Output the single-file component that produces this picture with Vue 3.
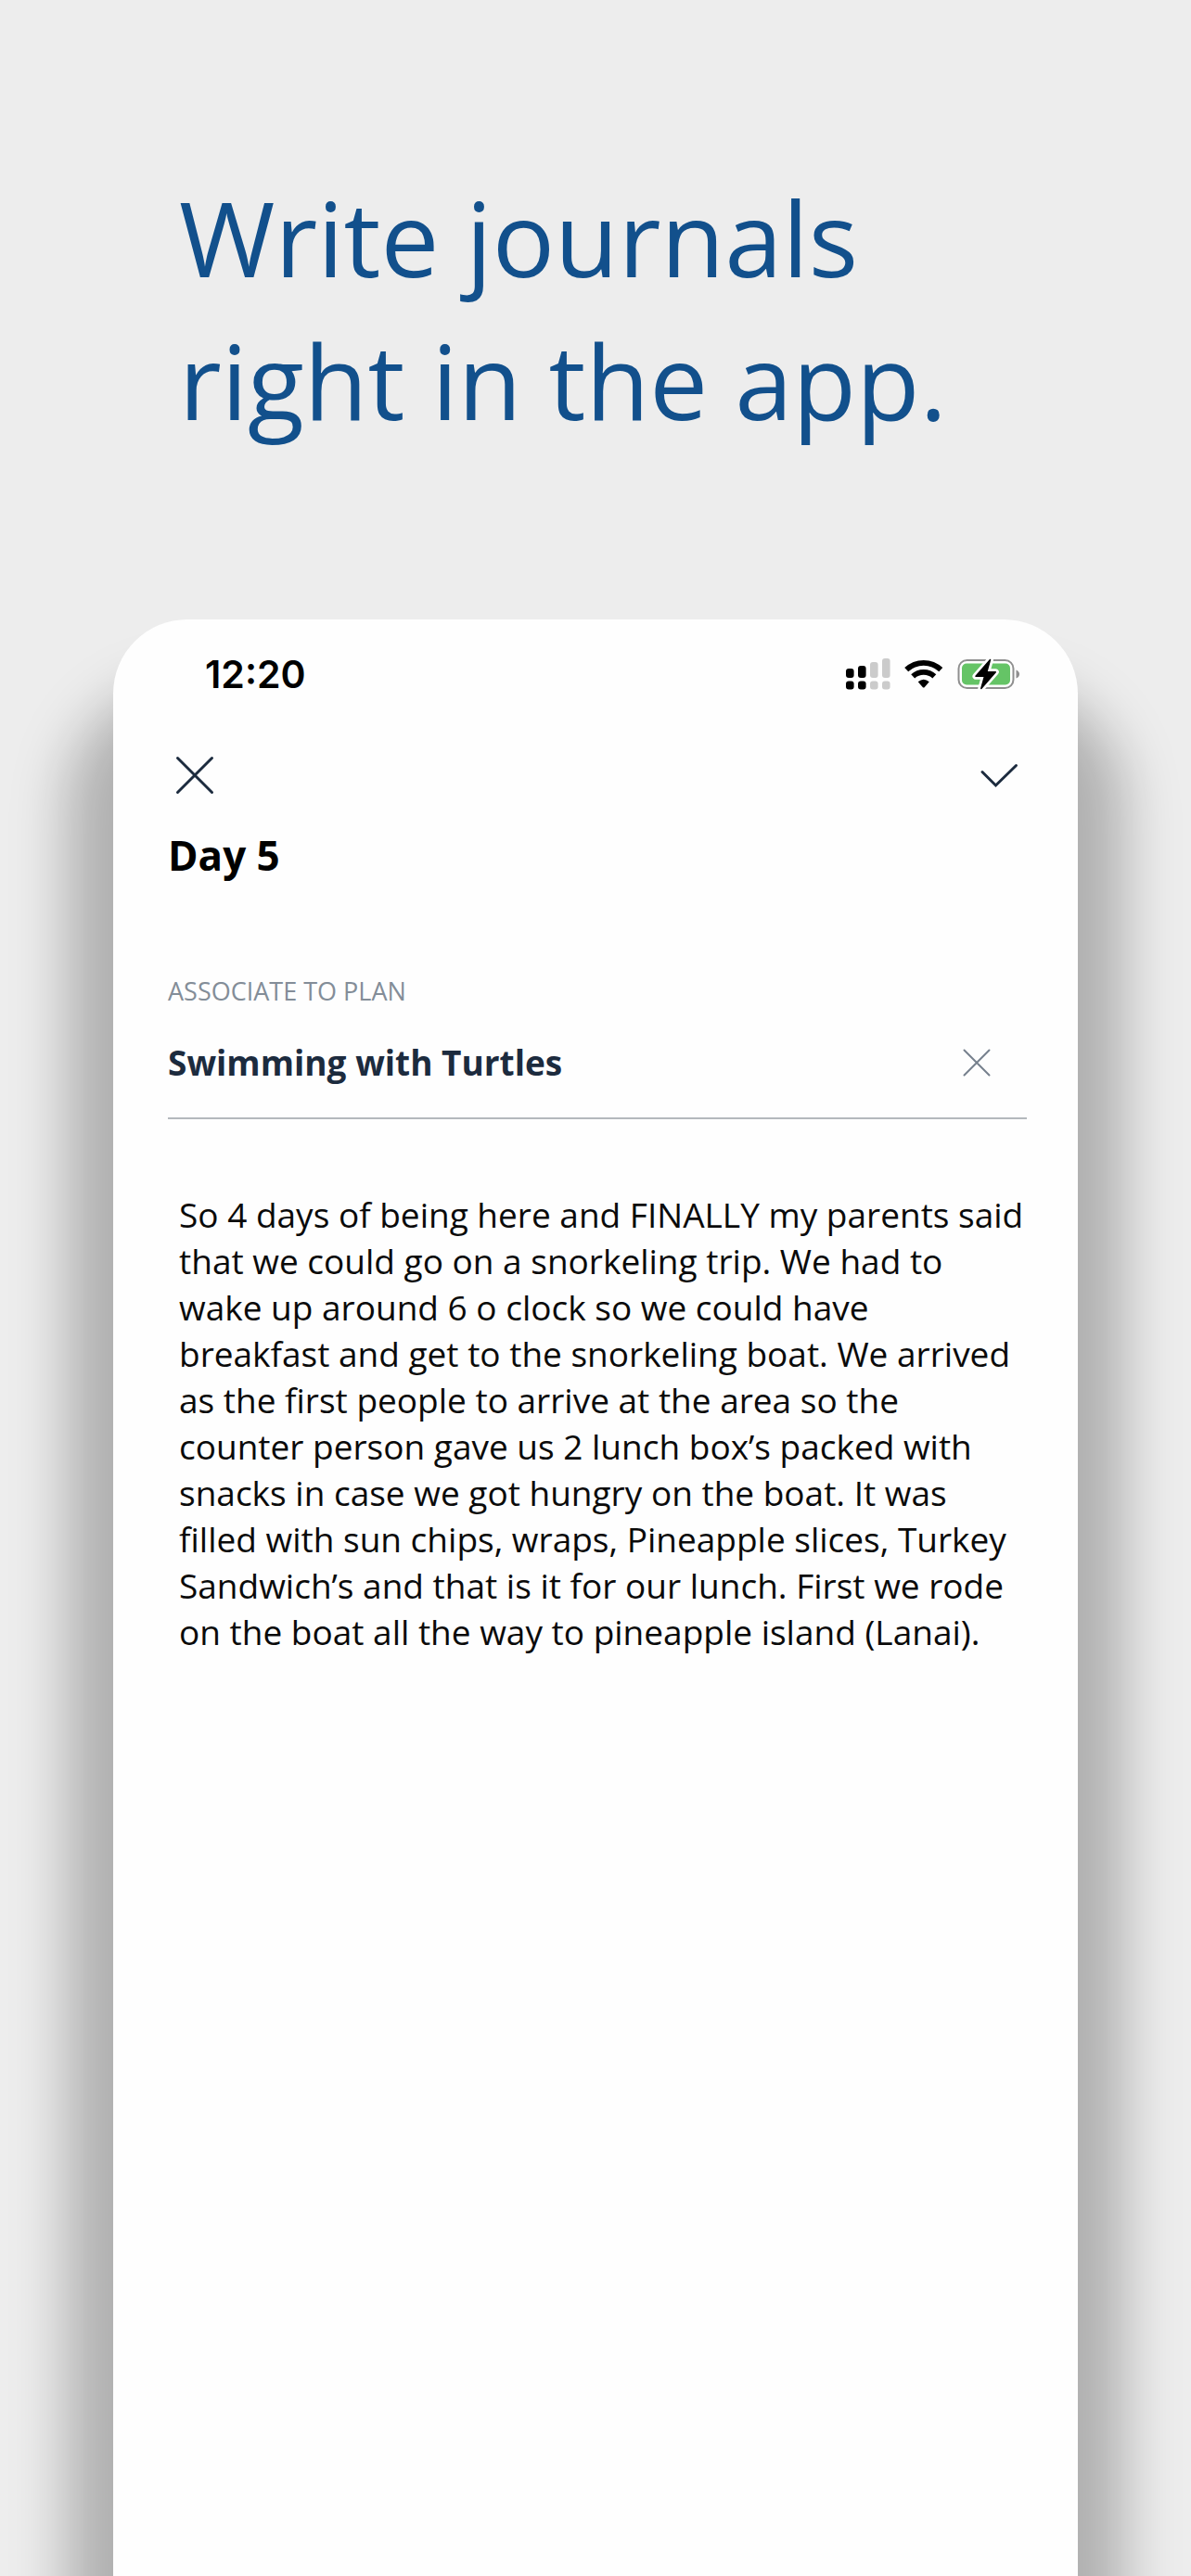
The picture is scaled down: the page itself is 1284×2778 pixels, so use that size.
<script setup>
import { ref } from 'vue'

const title = ref('Day 5')
const plan = ref('Swimming with Turtles')
const entry = ref(
  'So 4 days of being here and FINALLY my parents said that we could go on a snorkeling trip. We had to wake up around 6 o clock so we could have breakfast and get to the snorkeling boat. We arrived as the first people to arrive at the area so the counter person gave us 2 lunch box’s packed with snacks in case we got hungry on the boat. It was filled with sun chips, wraps, Pineapple slices, Turkey Sandwich’s and that is it for our lunch. First we rode on the boat all the way to pineapple island (Lanai).'
)
</script>

<template>
  <main class="page">
    <h1 class="headline">Write journals<br />right in the app.</h1>

    <section class="phone">
      <div class="status">
        <span class="time">12:20</span>
        <div class="indicators">
          <svg class="signal" width="48" height="34" viewBox="0 0 48 34" aria-hidden="true">
            <g fill="#000">
              <rect x="0" y="11" width="8.600" height="10" rx="3" />
              <rect x="13" y="8" width="8.600" height="13" rx="3" />
              <rect x="0" y="24.500" width="8.600" height="9" rx="3" />
              <rect x="13" y="24.500" width="8.600" height="9" rx="3" />
            </g>
            <g fill="#cbcbcb">
              <rect x="26" y="4" width="8.600" height="17" rx="3" />
              <rect x="39" y="0" width="8.600" height="21" rx="3" />
              <rect x="26" y="24.500" width="8.600" height="9" rx="3" />
              <rect x="39" y="24.500" width="8.600" height="9" rx="3" />
            </g>
          </svg>
          <svg class="wifi" width="42" height="34" viewBox="0 0 42 34" aria-hidden="true">
            <g fill="none" stroke="#000" stroke-width="5.800">
              <path d="M2.200 12.200A27 27 0 0 1 39.300 12.200" />
              <path d="M9.200 19.400A17 17 0 0 1 32.300 19.400" />
            </g>
            <path d="M14.700 25.200Q20.750 20.200 26.800 25.200L21.600 31.200Q20.750 32 19.900 31.200Z" />
          </svg>
          <svg class="battery" width="68" height="36" viewBox="0 0 68 36" aria-hidden="true">
            <rect x="1.500" y="3" width="59" height="30" rx="9" fill="#fff" stroke="#8f8f8f" stroke-width="2" />
            <rect x="5" y="6.500" width="52" height="23" rx="5" fill="#65c466" />
            <path d="M63.500 13.500Q67 15 67 18T63.500 22.500Z" fill="#8f8f8f" />
            <path
              d="M35.500 2.500L20 20.300H29.500L25.800 33.500L41.300 15.700H31.800Z"
              fill="#fff" stroke="#fff" stroke-width="7" stroke-linejoin="round"
            />
            <path
              d="M35.500 2.500L20 20.300H29.500L25.800 33.500L41.300 15.700H31.800Z"
              stroke="#000" stroke-width="1.500" stroke-linejoin="round"
            />
          </svg>
        </div>
      </div>

      <div class="toolbar">
        <button type="button" class="icon-button" aria-label="Close">
          <svg width="48" height="48" viewBox="0 0 48 48">
            <path d="M5.500 5.500L42.500 42.500M42.500 5.500L5.500 42.500" />
          </svg>
        </button>
        <button type="button" class="icon-button" aria-label="Save">
          <svg width="48" height="48" viewBox="0 0 48 48">
            <path d="M5 20.500L19.500 35L41.500 13.500" />
          </svg>
        </button>
      </div>

      <input v-model="title" class="title" type="text" aria-label="Journal title" />

      <label class="plan-label" for="plan">ASSOCIATE TO PLAN</label>
      <div class="plan-row">
        <input id="plan" v-model="plan" class="plan" type="text" />
        <button type="button" class="icon-button clear" aria-label="Remove plan">
          <svg width="36" height="36" viewBox="0 0 36 36">
            <path d="M4.500 4.500L31.500 31.500M31.500 4.500L4.500 31.500" />
          </svg>
        </button>
      </div>

      <textarea v-model="entry" class="entry" aria-label="Journal entry" spellcheck="false"></textarea>
    </section>
  </main>
</template>

<style>
body {
  margin: 0;
  background: #ededed;
}
</style>

<style scoped>
.page {
  box-sizing: border-box;
  display: flex;
  flex-direction: column;
  min-height: 100vh;
  padding: 179px 122px 0;
  overflow: hidden;
  background: #ededed;
  font-family: "Open Sans", "Noto Sans", sans-serif;
}

.headline {
  margin: 0 0 181px;
  padding-left: 71px;
  color: #12508c;
  font-size: 112px;
  font-weight: 400;
  line-height: 154px;
}

.phone {
  flex: 1;
  display: flex;
  flex-direction: column;
  padding: 42px 55px 0 59px;
  border-radius: 80px 80px 0 0;
  background: #fefefe;
  box-shadow: 0 120px 60px 50px rgba(0, 0, 0, 0.26);
}

.status {
  display: flex;
  align-items: center;
  justify-content: space-between;
  height: 34px;
  padding: 0 7px 0 40px;
}

.time {
  color: #000;
  font-family: Inter, "Liberation Sans", sans-serif;
  font-size: 41px;
  font-weight: 600;
  line-height: 34px;
}

.indicators {
  display: flex;
  align-items: center;
}

.wifi {
  margin: 0 15px;
}

.toolbar {
  display: flex;
  justify-content: space-between;
  margin-top: 68px;
  padding: 0 5px;
}

.icon-button {
  display: flex;
  padding: 0;
  border: 0;
  background: none;
  cursor: pointer;
}

.icon-button path {
  fill: none;
  stroke: #1c2b3e;
  stroke-width: 3;
  stroke-linecap: round;
}

.clear path {
  stroke: #76808d;
  stroke-width: 2;
}

.title,
.plan,
.entry {
  box-sizing: border-box;
  width: 100%;
  padding: 0;
  border: 0;
  outline: 0;
  background: none;
  font-family: inherit;
}

.title {
  height: 60px;
  margin-top: 32px;
  color: #000;
  font-size: 44px;
  font-weight: 700;
  line-height: 60px;
}

.plan-label {
  margin-top: 98px;
  color: #838d98;
  font-size: 27px;
  font-weight: 400;
  line-height: 38px;
}

.plan-row {
  display: flex;
  align-items: center;
  margin-top: 33px;
  padding: 0 36px 34px 0;
  border-bottom: 2px solid #b4b8bd;
}

.plan {
  flex: 1;
  min-width: 0;
  height: 50px;
  color: #1c2b3e;
  font-size: 37px;
  font-weight: 700;
  line-height: 50px;
}

.entry {
  flex: 1;
  min-height: 500px;
  margin-top: 78px;
  padding-left: 12px;
  color: #0a0a0a;
  font-size: 37px;
  line-height: 50px;
  resize: none;
}
</style>
